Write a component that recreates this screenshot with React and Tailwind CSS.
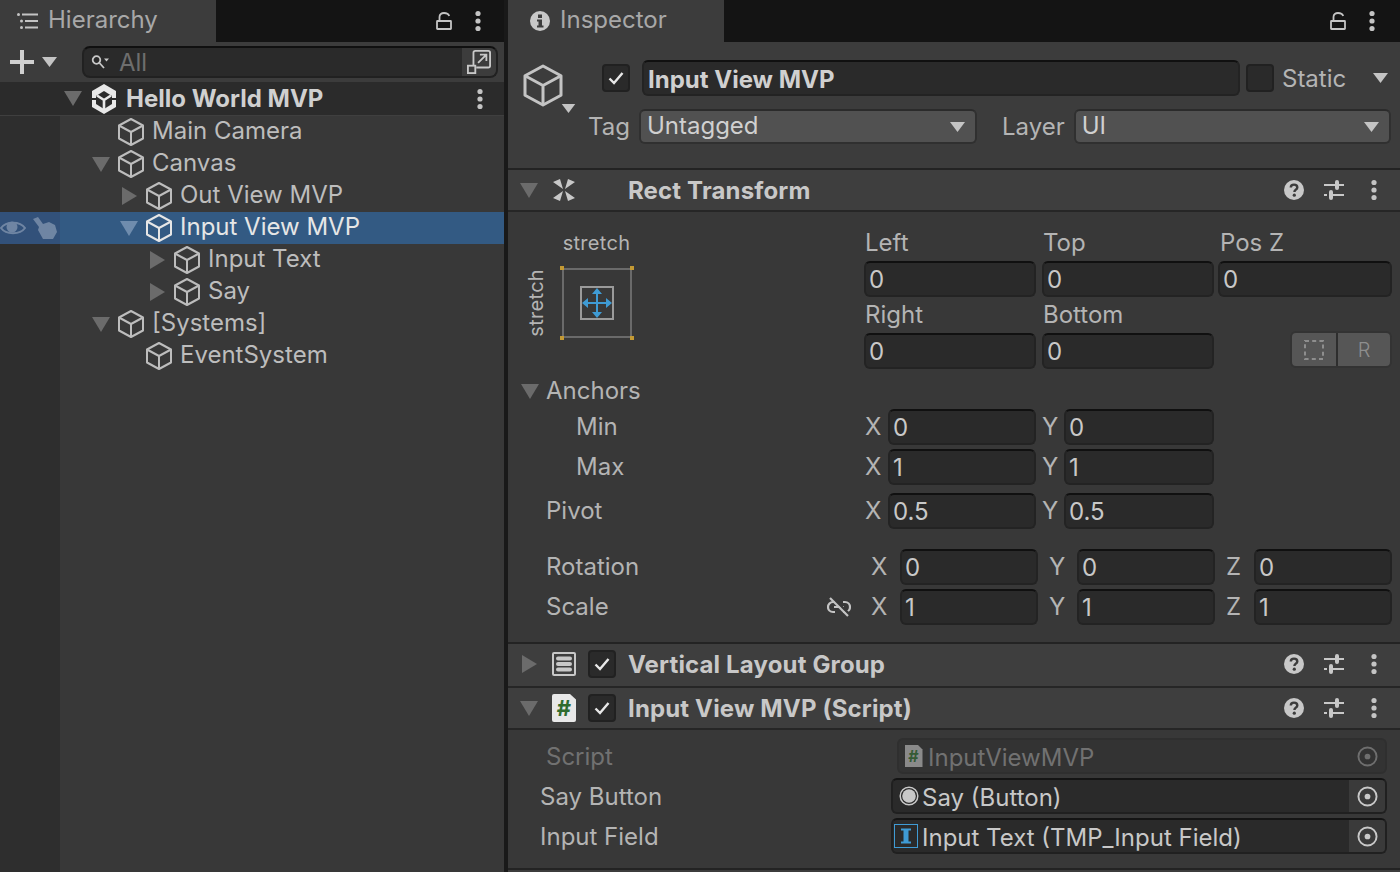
import React from 'react';

const Cube = ({ className = 'w-7 h-[30px]' }) => (
    <svg viewBox="0 0 28 30" className={`shrink-0 ${className}`} fill="none" stroke="currentColor" strokeWidth="2" strokeLinejoin="round">
        <path d="M14 2 L26 8.5 V21.5 L14 28 L2 21.5 V8.5 Z" />
        <path d="M2 8.5 L14 15 L26 8.5 M14 15 V28" />
    </svg>
);

const TriDown = ({ className = 'w-[18px] h-[15px] text-[#6b6b6b]' }) => (
    <svg viewBox="0 0 18 15" className={className} fill="currentColor"><path d="M0 0 H18 L9 15 Z" /></svg>
);

const TriRight = () => (
    <svg viewBox="0 0 15 18" className="w-[15px] h-[18px] text-[#6b6b6b]" fill="currentColor"><path d="M0 0 L15 9 L0 18 Z" /></svg>
);

const Caret = ({ className = 'w-[15px] h-[10px] text-[#c4c4c4]' }) => (
    <svg viewBox="0 0 15 10" className={className} fill="currentColor"><path d="M0 0 H15 L7.5 10 Z" /></svg>
);

const Dots = ({ className = 'text-[#c4c4c4]' }) => (
    <svg viewBox="0 0 8 22" className={`w-2 h-[22px] ${className}`} fill="currentColor">
        <circle cx="4" cy="3.5" r="2.6" /><circle cx="4" cy="11" r="2.6" /><circle cx="4" cy="18.5" r="2.6" />
    </svg>
);

const Lock = () => (
    <svg viewBox="0 0 16 18" className="w-4 h-[18px] text-[#c4c4c4]" fill="none" stroke="currentColor" strokeWidth="1.8">
        <path d="M3.5 9 V5 C3.5 2.2 5.5 1 8 1 C10.5 1 12.5 2 13.2 4" />
        <rect x="1" y="9" width="14" height="8" rx="0.5" />
    </svg>
);

const Check = () => (
    <svg viewBox="0 0 16 14" className="w-4 h-[14px] text-[#e8e8e8]" fill="none" stroke="currentColor" strokeWidth="2.4">
        <path d="M1.5 7.5 L6 12 L14.5 2" />
    </svg>
);

const CheckBox = ({ checked }) => (
    <div className="w-7 h-7 rounded-[4px] bg-[#2a2a2a] border-2 border-[#212121] flex items-center justify-center shrink-0">
        {checked && <Check />}
    </div>
);

const Field = ({ children, className = '' }) => (
    <div className={`h-9 rounded-[6px] bg-[#2a2a2a] border-2 border-[#232323] border-t-[#101010] pl-[3px] pt-[2px] flex items-center text-[#c8c8c8] ${className}`}>
        {children}
    </div>
);

const Dropdown = ({ children, className = '' }) => (
    <div className={`h-[35px] shrink-0 rounded-[6px] bg-[#515151] border-2 border-[#303030] border-t-[#2b2b2b] pl-[6px] pr-[10px] flex items-center justify-between text-[#d0d0d0] ${className}`}>
        <span className="pb-[2px]">{children}</span>
        <Caret />
    </div>
);

const HelpIcon = () => (
    <svg viewBox="0 0 20 20" className="w-5 h-5">
        <circle cx="10" cy="10" r="10" fill="#c8c8c8" />
        <path d="M6.8 7.6 C6.8 5.6 8.2 4.6 10 4.6 C12 4.6 13.3 5.8 13.3 7.4 C13.3 9.6 10.4 9.8 10.4 12" fill="none" stroke="#3c3c3c" strokeWidth="2.4" />
        <circle cx="10.3" cy="15.2" r="1.6" fill="#3c3c3c" />
    </svg>
);

const SlidersIcon = () => (
    <svg viewBox="0 0 20 20" className="w-5 h-5 text-[#c8c8c8]" fill="currentColor">
        <rect x="0" y="4" width="11" height="2" /><rect x="13" y="4" width="7" height="2" />
        <rect x="11" y="0" width="4" height="10" rx="2" />
        <rect x="0" y="14" width="3" height="2" /><rect x="5" y="14" width="15" height="2" />
        <rect x="5" y="10" width="4" height="10" rx="2" />
    </svg>
);

const HeaderActions = () => (
    <div className="ml-auto flex items-center mr-[22px]">
        <HelpIcon />
        <div className="ml-5"><SlidersIcon /></div>
        <div className="ml-[26px]"><Dots /></div>
    </div>
);

const ComponentHeader = ({ title, open, icon, checked, tall }) => (
    <div className={`${tall ? 'h-[44px] pb-[2px]' : 'h-[42px]'} shrink-0 bg-[#3e3e3e] border-b-2 border-[#262626] flex items-center font-bold text-[#c8c8c8] tracking-[0.15px]`}>
        <div className={`w-[44px] shrink-0 ${open ? 'pl-[12px]' : 'pl-[14px]'}`}>{open ? <TriDown /> : <TriRight />}</div>
        <div className="w-[24px] shrink-0 flex justify-center">{icon}</div>
        <div className="w-[12px] shrink-0" />
        <div className="w-[27px] shrink-0">{checked && <CheckBox checked />}</div>
        <div className="ml-[13px] pt-[2px]">{title}</div>
        <HeaderActions />
    </div>
);

const Axis = ({ label, value, labelClass, fieldClass }) => (
    <div className="flex items-center">
        <span className={labelClass}>{label}</span>
        <Field className={fieldClass}>{value}</Field>
    </div>
);

const hierarchyRows = [
    { name: 'Main Camera', depth: 0 },
    { name: 'Canvas', depth: 0, fold: 'down' },
    { name: 'Out View MVP', depth: 1, fold: 'right' },
    { name: 'Input View MVP', depth: 1, fold: 'down', selected: true },
    { name: 'Input Text', depth: 2, fold: 'right' },
    { name: 'Say', depth: 2, fold: 'right' },
    { name: '[Systems]', depth: 0, fold: 'down' },
    { name: 'EventSystem', depth: 1 },
];

const HierarchyRow = ({ name, depth, fold, selected }) => (
    <div className={`h-8 flex ${selected ? 'bg-[#335a83] text-[#e6e6e6]' : 'text-[#bdbdbd]'}`}>
        <div className={`w-[60px] shrink-0 flex items-center ${selected ? 'bg-[#32517a]' : 'bg-[#2e2e2e]'}`}>
            {selected && (
                <>
                    <svg viewBox="0 0 26 18" className="w-[26px] h-[18px] text-[#6f85a3]" fill="none" stroke="currentColor" strokeWidth="2">
                        <path d="M1 9 C6 2 20 2 25 9 C20 16 6 16 1 9 Z" />
                        <circle cx="12" cy="8" r="5.5" fill="currentColor" stroke="none" />
                    </svg>
                    <svg viewBox="0 0 24 22" className="w-6 h-[22px] ml-[7px] text-[#6f85a3]" fill="currentColor">
                        <path d="M0 2 L5 0 L10 7 L16 5 L22 8 L24 15 L20 22 L10 22 L5 13 L6 10 Z" />
                    </svg>
                </>
            )}
        </div>
        <div className="flex items-center" style={{ paddingLeft: 29 + depth * 28 }}>
            <div className="w-7 shrink-0 flex items-center">
                {fold === 'down' && <div className="ml-[3px]"><TriDown className={`w-[18px] h-[15px] ${selected ? 'text-[#6f8cad]' : 'text-[#6b6b6b]'}`} /></div>}
                {fold === 'right' && <div className="ml-[5px]"><TriRight /></div>}
            </div>
            <Cube />
            <span className="ml-[7px] pb-[2px]">{name}</span>
        </div>
    </div>
);

const HierarchyPanel = () => (
    <div className="w-[504px] shrink-0 flex flex-col bg-[#383838]">
        <div className="h-[42px] bg-[#141414] flex items-center shrink-0">
            <div className="w-[216px] h-full bg-[#3c3c3c] flex items-center pl-[17px] text-[#a8a8a8]">
                <svg viewBox="0 0 22 16" className="w-[22px] h-4 text-[#c4c4c4]" fill="currentColor">
                    <rect x="0" y="0" width="3" height="3" rx="1.5" /><rect x="5" y="0.5" width="16" height="2" />
                    <rect x="3" y="6.5" width="3" height="3" rx="1.5" /><rect x="8" y="7" width="13" height="2" />
                    <rect x="3" y="13" width="3" height="3" rx="1.5" /><rect x="8" y="13.5" width="13" height="2" />
                </svg>
                <span className="ml-[9px] pb-[2px]">Hierarchy</span>
            </div>
            <div className="ml-auto flex items-center mr-[22px]">
                <Lock />
                <div className="ml-[22px]"><Dots /></div>
            </div>
        </div>
        <div className="h-10 bg-[#3c3c3c] flex items-center shrink-0">
            <svg viewBox="0 0 24 24" className="w-6 h-6 ml-[10px] text-[#d0d0d0]" fill="currentColor">
                <rect x="0" y="10" width="24" height="4" /><rect x="10" y="0" width="4" height="24" />
            </svg>
            <Caret className="w-[15px] h-[10px] ml-2 text-[#c4c4c4]" />
            <div className="ml-[25px] w-[416px] h-8 rounded-[8px] bg-[#2a2a2a] border-2 border-[#212121] border-t-[#101010] flex items-center overflow-hidden">
                <svg viewBox="0 0 20 14" className="w-5 h-[14px] ml-[7px] text-[#c8c8c8]" fill="none" stroke="currentColor" strokeWidth="1.8">
                    <circle cx="5.5" cy="5" r="3.8" /><path d="M8.5 8 L13 13" />
                    <path d="M13 3.5 H18 L15.5 6.5 Z" fill="currentColor" stroke="none" />
                </svg>
                <span className="ml-2 pt-[2px] text-[#6e6e6e]">All</span>
                <div className="ml-auto w-[34px] h-full bg-[#3c3c3c] flex items-center justify-center">
                    <svg viewBox="0 0 26 26" className="w-6 h-6 text-[#c8c8c8]" fill="none" stroke="currentColor" strokeWidth="2">
                        <path d="M7 17 V3 A2 2 0 0 1 9 1 H23 A2 2 0 0 1 25 3 V17 A2 2 0 0 1 23 19 H10" />
                        <rect x="1" y="17" width="8" height="8" />
                        <path d="M12 14 L21 5 M14 5 H21 V12" />
                    </svg>
                </div>
            </div>
        </div>
        <div className="h-[34px] bg-[#2b2b2b] border-b-[1px] border-[#3f3f3f] flex items-center shrink-0 font-bold text-[#d0d0d0]">
            <div className="ml-16"><TriDown /></div>
            <svg viewBox="0 0 28 30" className="w-7 h-[30px] ml-2">
                <path d="M14 0 L26 7 V23 L14 30 L2 23 V7 Z" fill="#e8e8e8" />
                <path d="M14 7 L22 12 V20 L14 25 L6 20 V12 Z" fill="#2b2b2b" />
                <path d="M14 16 L7 11.5 M14 16 L21 11.5 M14 16 V25" stroke="#e8e8e8" strokeWidth="2.6" fill="none" />
                <path d="M0 15 H6 M22 15 H28" stroke="#2b2b2b" strokeWidth="2" />
            </svg>
            <span className="ml-2">Hello World MVP</span>
            <div className="ml-auto mr-5"><Dots /></div>
        </div>
        <div className="flex-1 flex flex-col relative">
            {hierarchyRows.map((row) => (
                <HierarchyRow key={row.name} {...row} />
            ))}
            <div className="flex-1 w-[60px] bg-[#2e2e2e]" />
        </div>
    </div>
);

const AnchorPreset = () => (
    <div className="w-[356px] shrink-0 flex">
        <div className="w-[52px] h-[72px] mt-[42px] flex items-center justify-end">
            <span className="[writing-mode:vertical-rl] rotate-180 text-[20px] tracking-[0.3px] text-[#b4b4b4] mr-[8px]">stretch</span>
        </div>
        <div className="flex flex-col">
            <div className="h-[36px] w-[73px] flex items-center justify-center text-[20px] tracking-[0.3px] text-[#b4b4b4]">stretch</div>
            <svg viewBox="0 0 74 74" className="w-[74px] h-[74px] mt-[5px]">
                <rect x="3" y="3" width="68" height="68" fill="none" stroke="#6a6a6a" strokeWidth="2" />
                <rect x="0" y="0" width="4" height="4" fill="#c49a34" /><rect x="70" y="0" width="4" height="4" fill="#c49a34" />
                <rect x="0" y="70" width="4" height="4" fill="#c49a34" /><rect x="70" y="70" width="4" height="4" fill="#c49a34" />
                <rect x="21" y="21" width="32" height="32" fill="none" stroke="#9a9a9a" strokeWidth="2" />
                <path d="M37 23 V51 M23 37 H51" stroke="#3f9bd4" strokeWidth="2" />
                <path d="M37 22 L42 28 H32 Z M37 52 L42 46 H32 Z M22 37 L28 32 V42 Z M52 37 L46 32 V42 Z" fill="#3f9bd4" />
            </svg>
        </div>
    </div>
);

const RectTransformBody = () => (
    <div className="h-[432px] shrink-0 bg-[#383838] border-b-2 border-[#232323] flex flex-col text-[#b4b4b4]">
        <div className="flex h-[158px] shrink-0 pt-[13px]">
            <AnchorPreset />
            <div className="grid grid-cols-[172px_172px_172px] gap-x-[6px] content-start">
                <div className="h-[36px] flex items-center pl-[1px]">Left</div>
                <div className="h-[36px] flex items-center pl-[1px]">Top</div>
                <div className="h-[36px] flex items-center pl-[1px] -ml-[1px]">Pos Z</div>
                <Field>0</Field><Field>0</Field><Field className="-ml-[2px]">0</Field>
                <div className="h-[36px] flex items-center pl-[1px]">Right</div>
                <div className="h-[36px] flex items-center pl-[1px]">Bottom</div>
                <div />
                <Field>0</Field><Field>0</Field>
                <div className="flex justify-end items-start">
                    <div className="h-[37px] w-[102px] -mt-[2px] rounded-[6px] bg-[#565656] border-2 border-[#333333] flex text-[#8e8e8e] text-[20px] font-light">
                        <div className="w-[46px] border-r-2 border-[#2e2e2e] flex items-center justify-center">
                            <svg viewBox="0 0 20 20" className="w-5 h-5" fill="none" stroke="#8e8e8e" strokeWidth="2" strokeDasharray="4 3.2">
                                <rect x="1" y="1" width="18" height="18" />
                            </svg>
                        </div>
                        <div className="flex-1 flex items-center justify-center">R</div>
                    </div>
                </div>
            </div>
        </div>
        <div className="h-[42px] flex items-center pl-[13px] shrink-0">
            <TriDown /><span className="ml-[7px]">Anchors</span>
        </div>
        <div className="h-[40px] flex items-center shrink-0 -mt-[5px]">
            <span className="w-[356px] pl-[68px]">Min</span>
            <Axis label="X" value="0" labelClass="w-6 pl-[1px]" fieldClass="w-[148px]" />
            <div className="w-[4px]" />
            <Axis label="Y" value="0" labelClass="w-[24px] pl-[2px]" fieldClass="w-[150px]" />
        </div>
        <div className="h-[40px] flex items-center shrink-0">
            <span className="w-[356px] pl-[68px]">Max</span>
            <Axis label="X" value="1" labelClass="w-6 pl-[1px]" fieldClass="w-[148px]" />
            <div className="w-[4px]" />
            <Axis label="Y" value="1" labelClass="w-[24px] pl-[2px]" fieldClass="w-[150px]" />
        </div>
        <div className="h-[44px] pt-[4px] flex items-center shrink-0">
            <span className="w-[356px] pl-[38px]">Pivot</span>
            <Axis label="X" value="0.5" labelClass="w-6 pl-[1px]" fieldClass="w-[148px]" />
            <div className="w-[4px]" />
            <Axis label="Y" value="0.5" labelClass="w-[24px] pl-[2px]" fieldClass="w-[150px]" />
        </div>
        <div className="h-[56px] pt-[16px] flex items-center shrink-0">
            <span className="w-[362px] pl-[38px]">Rotation</span>
            <Axis label="X" value="0" labelClass="w-[30px] pl-[1px]" fieldClass="w-[138px]" />
            <Axis label="Y" value="0" labelClass="w-[39px] pl-[11px]" fieldClass="w-[138px]" />
            <Axis label="Z" value="0" labelClass="w-[39px] pl-[11px]" fieldClass="w-[138px]" />
        </div>
        <div className="h-[40px] flex items-center shrink-0">
            <span className="w-[319px] pl-[38px]">Scale</span>
            <svg viewBox="0 0 24 20" className="w-6 h-5 mr-[19px] text-[#c4c4c4]" fill="none" stroke="currentColor" strokeWidth="2.2">
                <path d="M8 5 H6 A5 5 0 0 0 6 15 H8 M16 5 H18 A5 5 0 0 1 18 15 H16 M7 10 H17" />
                <path d="M5 0 L23 18" stroke="#383838" strokeWidth="2.5" />
                <path d="M3 1 L21 19" strokeWidth="2.2" />
            </svg>
            <Axis label="X" value="1" labelClass="w-[30px] pl-[1px]" fieldClass="w-[138px]" />
            <Axis label="Y" value="1" labelClass="w-[39px] pl-[11px]" fieldClass="w-[138px]" />
            <Axis label="Z" value="1" labelClass="w-[39px] pl-[11px]" fieldClass="w-[138px]" />
        </div>
    </div>
);

const TargetDot = ({ dim }) => (
    <svg viewBox="0 0 22 22" className={`w-[21px] h-[21px] ${dim ? 'text-[#6e6e6e]' : 'text-[#c8c8c8]'}`} fill="none" stroke="currentColor" strokeWidth="2">
        <circle cx="11" cy="11" r="9.5" />
        <circle cx="11" cy="11" r="3" fill="currentColor" stroke="none" />
    </svg>
);

const ObjectField = ({ icon, text, dim }) => (
    <div className={`h-9 flex-1 rounded-[6px] border-2 overflow-hidden flex items-center ${dim ? 'bg-[#333333] border-[#2f2f2f] text-[#717171]' : 'bg-[#2a2a2a] border-[#202020] border-t-[#141414] text-[#c8c8c8]'}`}>
        <div className="w-[29px] flex justify-center shrink-0">{icon}</div>
        <span className="pt-[4px]">{text}</span>
        <div className={`ml-auto w-9 h-full flex items-center justify-center ${dim ? 'bg-[#333333]' : 'bg-[#3a3a3a]'}`}>
            <TargetDot dim={dim} />
        </div>
    </div>
);

const InspectorPanel = () => (
    <div className="flex-1 min-w-0 flex flex-col bg-[#3c3c3c]">
        <div className="h-[42px] bg-[#141414] flex items-center shrink-0">
            <div className="w-[216px] h-full bg-[#3c3c3c] flex items-center pl-[22px] text-[#a8a8a8]">
                <svg viewBox="0 0 20 20" className="w-5 h-5">
                    <circle cx="10" cy="10" r="10" fill="#c8c8c8" />
                    <rect x="8" y="3.5" width="4" height="3.5" fill="#3c3c3c" />
                    <path d="M7 8.5 H12 V14.5 H13.5 V16.5 H7 V14.5 H8.5 V10.5 H7 Z" fill="#3c3c3c" />
                </svg>
                <span className="ml-[10px] pb-[2px]">Inspector</span>
            </div>
            <div className="ml-auto flex items-center mr-[24px]">
                <Lock />
                <div className="ml-[22px]"><Dots /></div>
            </div>
        </div>
        <div className="h-[128px] border-b-2 border-[#232323] flex shrink-0">
            <div className="w-[81px] shrink-0 relative">
                <div className="absolute left-[14px] top-[21px] text-[#c4c4c4]"><Cube className="w-[42px] h-[45px]" /></div>
                <div className="absolute left-[53px] top-[62px]"><Caret className="w-[15px] h-[9px] text-[#c4c4c4]" /></div>
            </div>
            <div className="flex-1 flex flex-col min-w-0">
                <div className="h-[36px] mt-[18px] flex items-center">
                    <div className="ml-[13px]"><CheckBox checked /></div>
                    <Field className="w-[598px] ml-[12px] font-bold text-[#d0d0d0]">
                        <span className="ml-[1px] relative top-[1px]">Input View MVP</span>
                    </Field>
                    <div className="ml-[6px]"><CheckBox /></div>
                    <span className="ml-2 pt-[2px] text-[#b4b4b4]">Static</span>
                    <Caret className="w-[15px] h-[10px] ml-auto mr-[12px] text-[#c4c4c4]" />
                </div>
                <div className="h-[35px] mt-[13px] flex items-center">
                    <span className="-ml-[1px] text-[#b4b4b4]">Tag</span>
                    <Dropdown className="w-[338px] ml-[9px]">Untagged</Dropdown>
                    <span className="ml-[25px] text-[#b4b4b4]">Layer</span>
                    <Dropdown className="w-[317px] ml-[9px]">UI</Dropdown>
                </div>
            </div>
        </div>
        <ComponentHeader
            title="Rect Transform"
            open
            icon={
                <svg viewBox="0 0 24 24" className="w-6 h-6 text-[#c8c8c8]" fill="currentColor">
                    <path d="M1 4 L8 1 L11 11 Z M23 4 L16 1 L13 11 Z M1 20 L8 23 L11 13 Z M23 20 L16 23 L13 13 Z" />
                </svg>
            }
        />
        <RectTransformBody />
        <ComponentHeader
            title="Vertical Layout Group"
            checked
            tall
            icon={
                <svg viewBox="0 0 24 24" className="w-6 h-6 text-[#c8c8c8]" fill="none" stroke="currentColor" strokeWidth="2">
                    <rect x="1" y="1" width="22" height="22" rx="1" />
                    <path d="M6 6.5 H18 M6 12 H18 M6 17.5 H18" strokeWidth="4" strokeLinecap="round" />
                </svg>
            }
        />
        <ComponentHeader
            title="Input View MVP (Script)"
            open
            checked
            icon={
                <div className="w-6 h-7 bg-[#e8e8e8] rounded-[2px] [clip-path:polygon(0_0,75%_0,100%_20%,100%_100%,0_100%)] flex items-center justify-center text-[#2f6b2f] text-[22px] font-bold leading-none">#</div>
            }
        />
        <div className="h-[140px] shrink-0 bg-[#383838] border-b-2 border-[#232323] pt-[8px] flex flex-col gap-1 text-[#b4b4b4]">
            <div className="flex items-center">
                <span className="w-[389px] pl-[38px] pt-[2px] text-[#717171]">Script</span>
                <div className="flex-1 mr-[13px] flex">
                    <ObjectField
                        dim
                        text="InputViewMVP"
                        icon={<div className="w-[18px] h-[22px] bg-[#8a8a8a] [clip-path:polygon(0_0,75%_0,100%_20%,100%_100%,0_100%)] text-[#355a35] text-[16px] font-bold leading-[22px] text-center">#</div>}
                    />
                </div>
            </div>
            <div className="flex items-center">
                <span className="w-[383px] pl-[32px] pt-[2px]">Say Button</span>
                <div className="flex-1 mr-[13px] flex">
                    <ObjectField
                        text="Say (Button)"
                        icon={
                            <svg viewBox="0 0 20 20" className="w-5 h-5 text-[#c8c8c8] ml-[2px]" fill="currentColor">
                                <circle cx="10" cy="10" r="8.8" fill="none" stroke="currentColor" strokeWidth="1.5" />
                                <circle cx="10" cy="10" r="6.8" />
                            </svg>
                        }
                    />
                </div>
            </div>
            <div className="flex items-center">
                <span className="w-[383px] pl-[32px] pt-[2px]">Input Field</span>
                <div className="flex-1 mr-[13px] flex">
                    <ObjectField
                        text="Input Text (TMP_Input Field)"
                        icon={
                            <svg viewBox="0 0 24 24" className="w-6 h-6 ml-[-3px] text-[#3f9bd4]" fill="currentColor">
                                <rect x="0.5" y="0.5" width="23" height="23" fill="none" stroke="currentColor" />
                                <path d="M7 4.5 H17 V6.5 H14.5 V17.5 H17 V19.5 H7 V17.5 H9.5 V6.5 H7 Z" />
                            </svg>
                        }
                    />
                </div>
            </div>
        </div>
    </div>
);

export default function App() {
    return (
        <div className="w-[1400px] h-[872px] overflow-hidden flex bg-[#191919] text-[24px] leading-[32px] font-['Inter',sans-serif]">
            <HierarchyPanel />
            <div className="w-1 shrink-0" />
            <InspectorPanel />
        </div>
    );
}
